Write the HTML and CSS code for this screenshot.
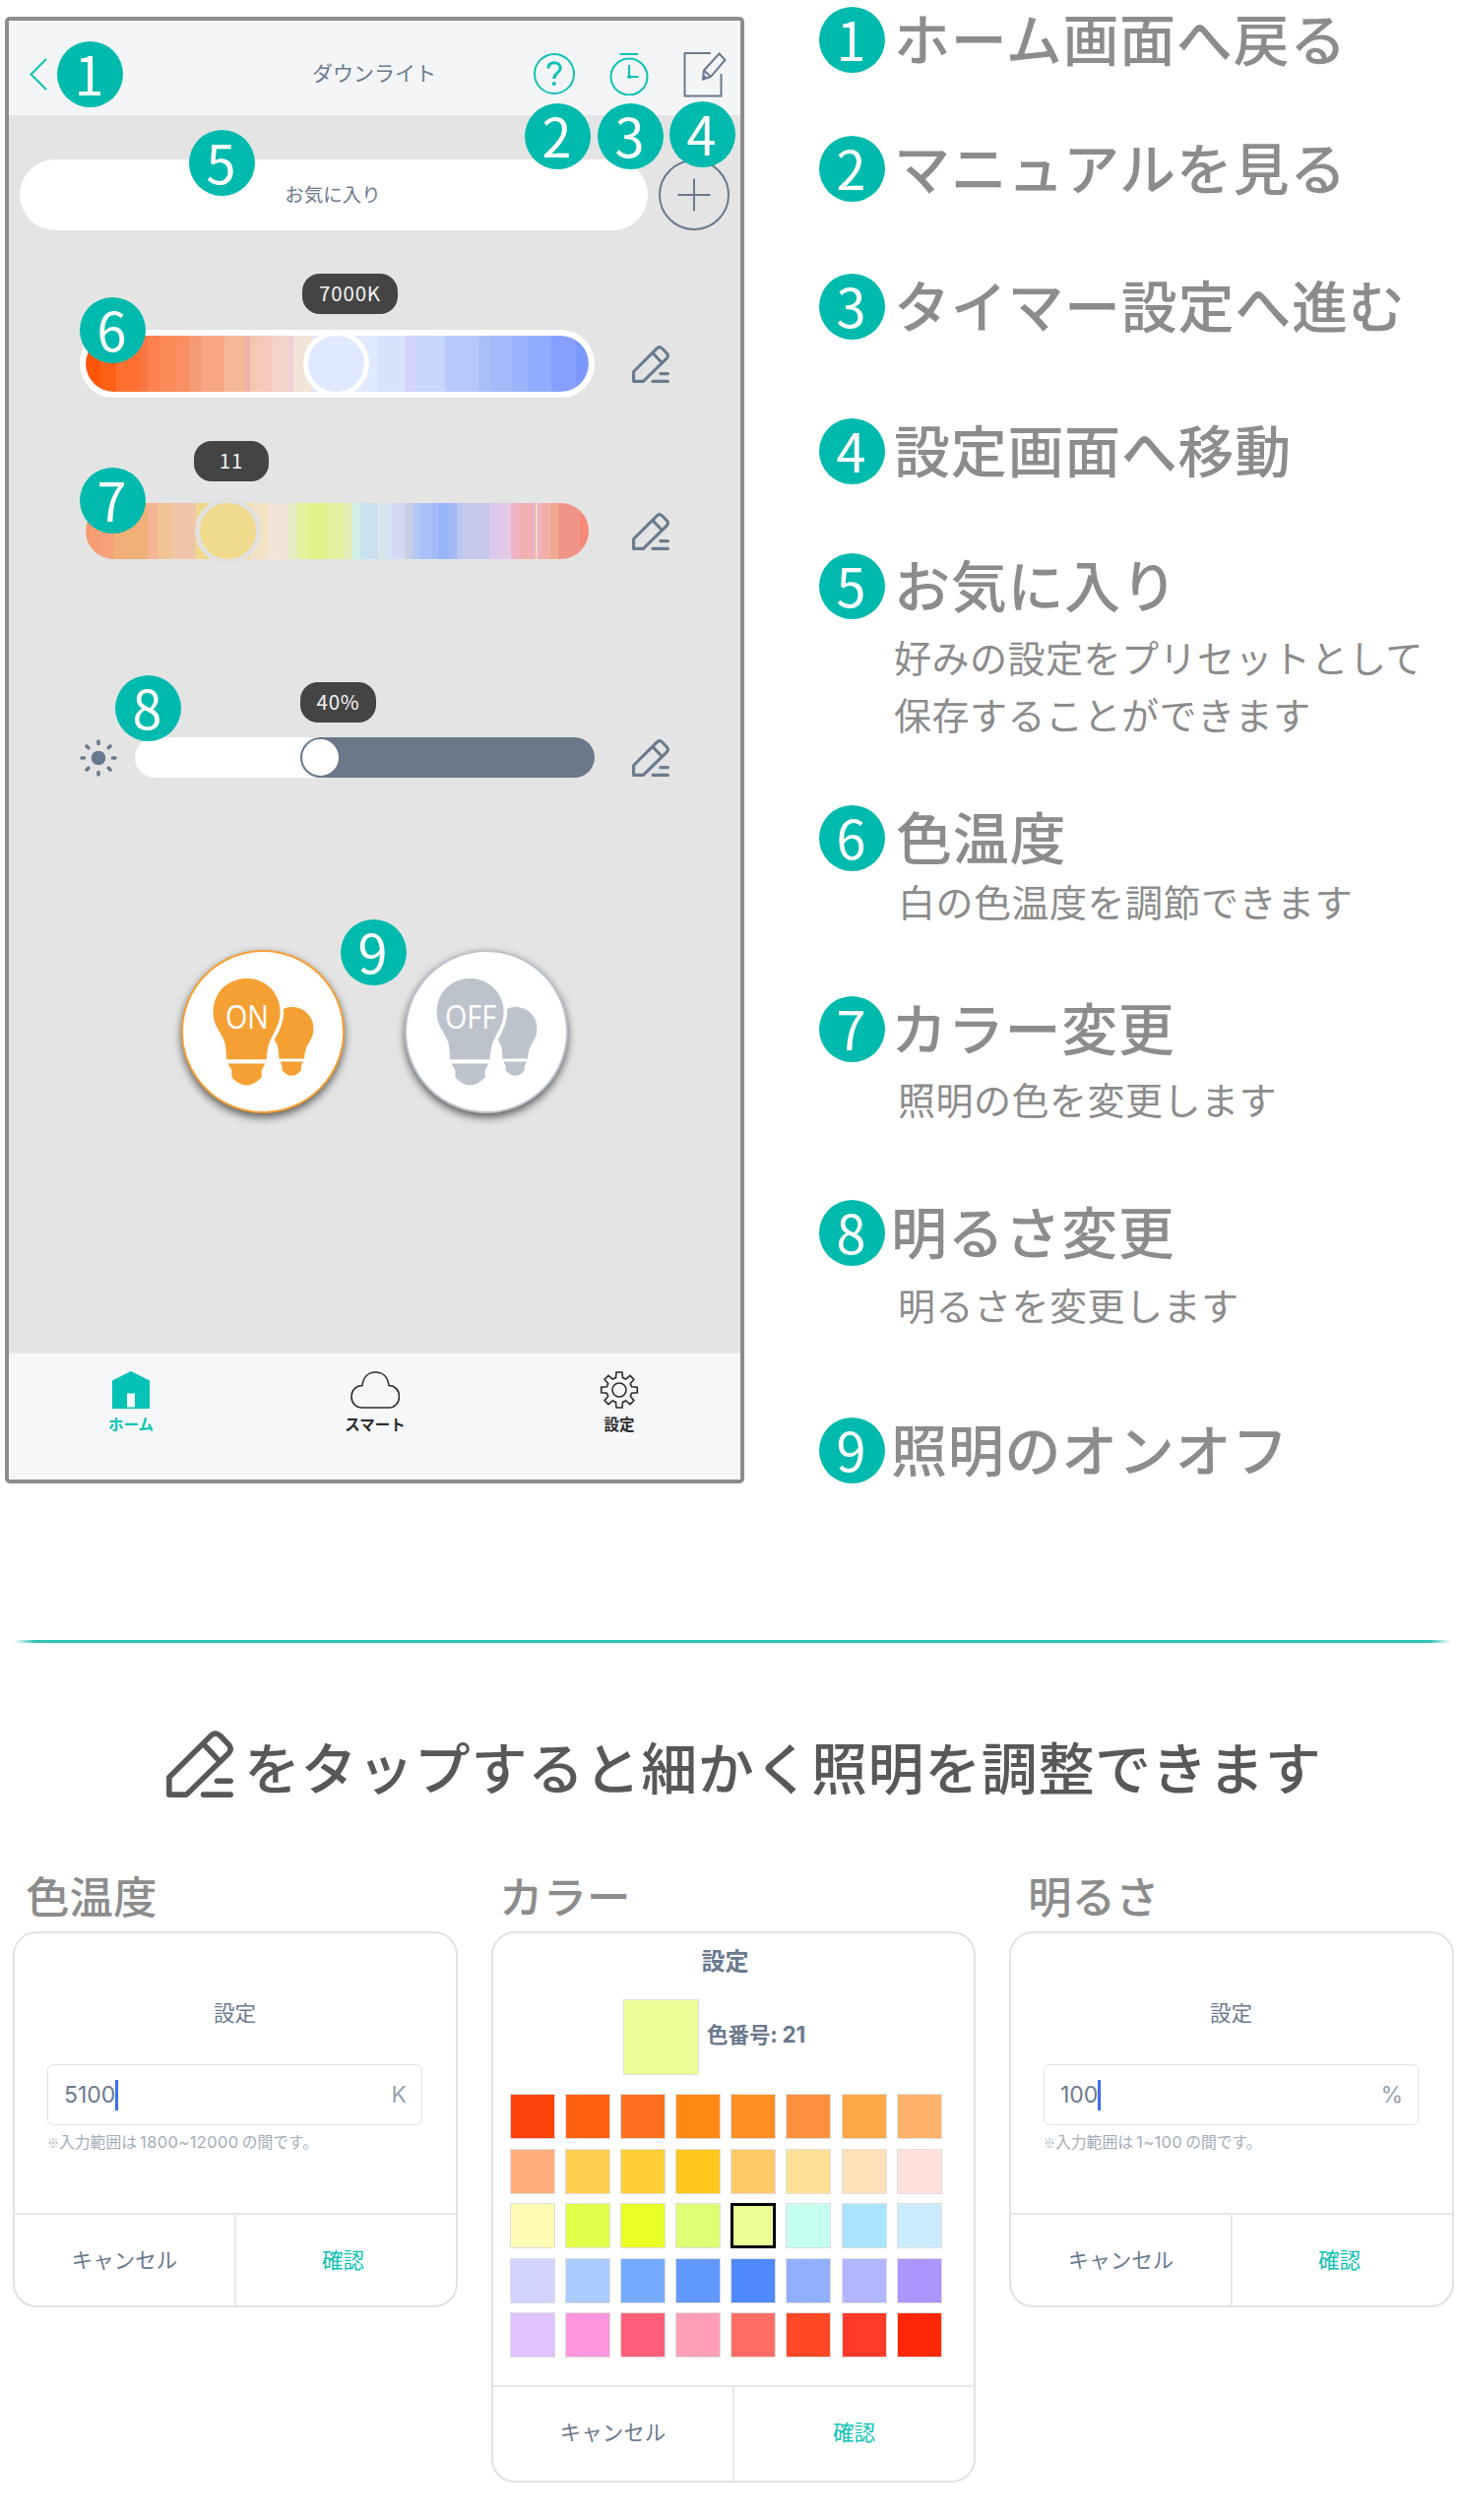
FILE: index.html
```html
<!DOCTYPE html>
<html lang="ja">
<head>
    <meta charset="UTF-8">
    <meta name="viewport" content="width=device-width, initial-scale=1.0">
    <title>ダウンライト 操作ガイド</title>
    <link rel="stylesheet" href="styles.css">
</head>
<body>

<svg class="symbols" width="0" height="0">
    <symbol id="pencil" viewBox="0 0 38 38">
        <path d="M1.6 26.500 L25.600 2.600 Q28 0.700 30.400 2.800 L35.400 8 Q37.400 10.400 35.400 12.800 L11.400 36.400 H1.600 Z M21 7.600 L29.600 16.800 M28.800 28.600 H36.400 M21 36.400 H36.400" fill="none" stroke="currentColor" stroke-width="3.1" stroke-linecap="round" stroke-linejoin="round"/>
    </symbol>
    <symbol id="bulbs" viewBox="72 135 500 500">
        <path d="M170 325 C170 265 215 222 272 222 S375 265 375 325 C375 370 350 390 338 430 Q334 450 333 470 H211 Q210 440 206 420 C195 385 170 370 170 325Z"/>
        <path d="M215 483 H329 L318 503 V525 Q295 549 272 549 Q249 549 227 525 V503Z"/>
        <path d="M385 316 Q395 310 411 310 C450 310 477 340 477 375 C477 405 462 415 455 435 Q449 450 449 468 H371 Q371 445 368 433 Q365 420 357 410 C375 380 388 350 385 316Z"/>
        <path d="M375 477 H446 L439 490 V503 Q425 520 410 520 Q395 520 381 503 V490Z"/>
    </symbol>
</svg>

<main class="guide">
    <section class="phone">
        <header class="phone-header">
            <svg class="back" viewBox="0 0 18 33"><path d="M17 1 L1.5 16.5 L17 32"/></svg>
            <h1>ダウンライト</h1>
            <div class="header-icons">
                <svg class="help" viewBox="0 0 42 42">
                    <circle cx="21" cy="21" r="20"/>
                    <path d="M14.8 15.5 C15 11.5 17.500 9.800 21 9.800 C24.800 9.800 27.200 12 27.200 15.300 C27.200 20 20.800 20 20.800 26" class="thick"/>
                    <circle cx="20.800" cy="31" r="2" class="dot"/>
                </svg>
                <svg class="timer" viewBox="0 0 40 44">
                    <path d="M10.500 2 H29"/>
                    <circle cx="20" cy="25" r="18.500"/>
                    <path d="M20 13 V25 H29.500"/>
                    <circle cx="20" cy="25" r="2" class="dot"/>
                </svg>
                <svg class="edit" viewBox="0 0 44 47">
                    <path d="M28 2 H1.500 V45.500 H38.500 V23"/>
                    <path d="M36.500 2.500 L42.500 9 L28 26 L20 28.500 L21 19.500 Z M21 19.500 L28 26"/>
                    <path d="M20 28.500 L20.500 23.500 L24.500 27 Z" class="lead"/>
                </svg>
            </div>
        </header>

        <div class="phone-body">
            <div class="favorite-row">
                <div class="favorite">お気に入り</div>
                <svg class="add" viewBox="0 0 72 72"><circle cx="36" cy="36" r="35"/><path d="M19.500 36 H52.500 M36 19.500 V52.500"/></svg>
            </div>

            <div class="control">
                <div class="slider temperature"><span class="thumb"></span></div>
                <svg class="pencil"><use href="#pencil"/></svg>
                <span class="tooltip tip-temperature">7000K</span>
            </div>

            <div class="control">
                <div class="slider color"><span class="thumb"></span></div>
                <svg class="pencil"><use href="#pencil"/></svg>
                <span class="tooltip tip-color">11</span>
            </div>

            <div class="control control-brightness">
                <svg class="sun" viewBox="0 0 38 38">
                    <circle cx="19" cy="19" r="7.300"/>
                    <path d="M19 2 V4.500 M19 33.500 V36 M2 19 H4.500 M33.500 19 H36 M7 7 L8.800 8.800 M29.200 29.200 L31 31 M31 7 L29.200 8.800 M8.800 29.200 L7 31"/>
                </svg>
                <div class="brightness"><span class="knob"></span></div>
                <svg class="pencil"><use href="#pencil"/></svg>
                <span class="tooltip tip-brightness">40%</span>
            </div>

            <div class="power">
                <div class="power-button on"><svg><use href="#bulbs"/></svg><span>ON</span></div>
                <div class="power-button off"><svg><use href="#bulbs"/></svg><span>OFF</span></div>
            </div>
        </div>

        <nav class="tabs">
            <div class="tab active">
                <svg viewBox="0 0 50 40"><path d="M25 1 L44 10.500 V39 H6 V10.500 Z" class="fill"/><path d="M21 23.500 H29 V37.500 H21Z" class="door"/></svg>
                ホーム
            </div>
            <div class="tab">
                <svg viewBox="0 0 50 40"><path d="M12 38 C5 38 1 33 1 27 C1 20 6 15.500 12 15.500 C13 7 18 2 25.500 2 C33 2 38 7 39 15.500 C45 15.500 49.500 20 49.500 27 C49.500 33 45 38 39 38 Z"/></svg>
                スマート
            </div>
            <div class="tab">
                <svg viewBox="0 0 50 40">
                    <path d="M21.500 7.600 L22 2 H28 L28.500 7.600 L31.700 9 L36 5.400 L39.900 9.300 L36.300 13.600 L37.600 16.700 L43.300 17.200 V22.800 L37.600 23.300 L36.300 26.400 L39.900 30.700 L36 34.600 L31.700 31 L28.500 32.400 L28 38 H22 L21.500 32.400 L18.300 31 L14 34.600 L10.100 30.700 L13.700 26.400 L12.400 23.300 L6.700 22.800 V17.200 L12.400 16.700 L13.700 13.600 L10.100 9.300 L14 5.400 L18.300 9 Z"/>
                    <circle cx="25" cy="20" r="7"/>
                </svg>
                設定
            </div>
        </nav>

        <span class="badge pin pin-1">1</span>
        <span class="badge pin pin-2">2</span>
        <span class="badge pin pin-3">3</span>
        <span class="badge pin pin-4">4</span>
        <span class="badge pin pin-5">5</span>
        <span class="badge pin pin-6">6</span>
        <span class="badge pin pin-7">7</span>
        <span class="badge pin pin-8">8</span>
        <span class="badge pin pin-9">9</span>
    </section>

    <ol class="legend">
        <li><span class="badge">1</span><h2>ホーム画面へ戻る</h2></li>
        <li><span class="badge">2</span><h2>マニュアルを見る</h2></li>
        <li><span class="badge">3</span><h2>タイマー設定へ進む</h2></li>
        <li><span class="badge">4</span><h2>設定画面へ移動</h2></li>
        <li class="favorite-note"><span class="badge">5</span><h2>お気に入り</h2><p>好みの設定をプリセットとして<br>保存することができます</p></li>
        <li class="temperature-note"><span class="badge">6</span><h2>色温度</h2><p>白の色温度を調節できます</p></li>
        <li class="color-note"><span class="badge">7</span><h2>カラー変更</h2><p>照明の色を変更します</p></li>
        <li class="brightness-note"><span class="badge">8</span><h2>明るさ変更</h2><p>明るさを変更します</p></li>
        <li class="power-note"><span class="badge">9</span><h2>照明のオンオフ</h2></li>
    </ol>
</main>

<hr>

<h2 class="detail-title"><svg><use href="#pencil"/></svg>をタップすると細かく照明を調整できます</h2>

<section class="dialogs">
    <div class="dialog-column">
        <h3>色温度</h3>
        <div class="dialog">
            <div class="dialog-body">
                <h4>設定</h4>
                <div class="field"><span class="value">5100</span><span class="unit">K</span></div>
                <p class="note"><small>※</small>入力範囲は<span>1800~12000</span>の間です。</p>
            </div>
            <div class="actions"><span>キャンセル</span><span class="ok">確認</span></div>
        </div>
    </div>

    <div class="dialog-column column-color">
        <h3>カラー</h3>
        <div class="dialog dialog-color">
            <div class="dialog-body">
                <h4>設定</h4>
                <div class="current"><i></i><b>色番号: <span>21</span></b></div>
                <div class="swatches" id="swatches"></div>
            </div>
            <div class="actions"><span>キャンセル</span><span class="ok">確認</span></div>
        </div>
    </div>

    <div class="dialog-column column-brightness">
        <h3>明るさ</h3>
        <div class="dialog">
            <div class="dialog-body">
                <h4>設定</h4>
                <div class="field"><span class="value">100</span><span class="unit">%</span></div>
                <p class="note"><small>※</small>入力範囲は<span>1~100</span>の間です。</p>
            </div>
            <div class="actions"><span>キャンセル</span><span class="ok">確認</span></div>
        </div>
    </div>
</section>

<script>
    const colors = [
        '#ff430c', '#ff6010', '#ff6f20', '#ff8812', '#ff8f22', '#ff9040', '#ffa845', '#ffb26a',
        '#ffad7a', '#ffcf50', '#ffd035', '#ffc71c', '#ffcb68', '#ffe298', '#fee1b9', '#ffe0da',
        '#fffbb4', '#e4ff4a', '#eaff26', '#dcff74', '#ecff97', '#c5fff0', '#aae4ff', '#cbecff',
        '#d2d4ff', '#aaccff', '#74aaff', '#6098ff', '#4f88ff', '#90b0ff', '#b0b6ff', '#ac95ff',
        '#dfc2ff', '#ff95df', '#ff5f78', '#ff9eb6', '#ff6e65', '#ff4824', '#ff3a28', '#ff2706'
    ];
    const selected = 21;

    const swatches = document.getElementById('swatches');
    colors.forEach((color, index) => {
        const swatch = document.createElement('i');
        swatch.style.background = color;
        if (index + 1 === selected) {
            swatch.className = 'selected';
        }
        swatches.appendChild(swatch);
    });
</script>

</body>
</html>
```

FILE: styles.css
```css
* {
    box-sizing: border-box;
}
body {
    margin: 0;
    background: #fff;
    font-family: "Noto Sans CJK JP", sans-serif;
    color: #8c8c8c;
}
h1, h2, h3, h4, p, ol {
    margin: 0;
    padding: 0;
    font-weight: normal;
}
.symbols {
    position: absolute;
}
.guide {
    display: flex;
    height: 1666px;
    padding-left: 5px;
}

/* phone screen */
.phone {
    position: relative;
    display: flex;
    flex-direction: column;
    width: 751px;
    height: 1490px;
    margin-top: 17px;
    border: 4px solid #8c8c8c;
    border-radius: 5px;
    background: #e4e4e4;
    color: #6a7a8e;
}
.phone svg {
    fill: none;
    stroke: currentColor;
    stroke-width: 2;
}
.phone-header {
    display: grid;
    grid-template-columns: 200px 1fr 200px;
    align-items: center;
    height: 96px;
    padding: 12px 14px 0 21px;
    background: #f3f5f7;
}
.phone-header h1 {
    padding: 0 8px 4px 0;
    font-size: 21px;
    line-height: 30px;
    text-align: center;
}
.back {
    width: 18px;
    height: 33px;
    color: #0bc2b4;
}
.header-icons {
    display: flex;
    align-items: center;
    justify-content: flex-end;
    gap: 35px;
}
.help {
    width: 42px;
    height: 42px;
    color: #0bc2b4;
}
.timer {
    width: 40px;
    height: 44px;
    color: #0bc2b4;
}
.edit {
    width: 44px;
    height: 47px;
}
.phone .thick {
    stroke-width: 3;
}
.phone .dot, .phone .lead {
    fill: currentColor;
    stroke: none;
}
.phone-body {
    flex: 1;
    padding-top: 45px;
}
.favorite-row {
    display: flex;
    gap: 11px;
    margin-left: 11px;
}
.favorite {
    width: 638px;
    height: 72px;
    padding-right: 2px;
    border-radius: 36px;
    background: #fff;
    font-size: 19.5px;
    line-height: 70px;
    text-align: center;
}
.add {
    width: 72px;
    height: 72px;
}
.control {
    position: relative;
    display: flex;
    align-items: center;
    height: 69px;
    margin: 101px 0 0 72px;
}
.pencil {
    width: 38px;
    height: 38px;
    margin-left: 38px;
}
.slider {
    position: relative;
    width: 523px;
    height: 69px;
    border: 6px solid #fff;
    border-radius: 35px;
}
.temperature {
    background: linear-gradient(to right, #ff5508 2.8%, #ff5f15 2.8% 6.1%, #ff7030 6.1% 10.9%, #fa7544 10.9% 12.3%, #ff8050 12.3% 14.7%, #fc8a58 14.7% 17.8%, #fa8f62 17.8% 20.5%, #f59a74 20.5% 22.9%, #f8a684 22.9% 27.5%, #f5b896 27.5% 31.7%, #f0b0b0 31.7% 32.6%, #f3c8aa 32.6% 34%, #f5cabb 34% 37.2%, #f4d4c8 37.2% 40.2%, #ecd0d2 40.2% 41.3%, #f2e4d8 41.3% 45%, #dfe9ff 45% 57.9%, #d8e3fb 57.9% 63.5%, #d2d4fc 63.5% 65.5%, #c8d6fb 65.5% 71.4%, #b6c8fc 71.4% 78%, #a8c0f6 78% 80.4%, #a4bafa 80.4% 84.7%, #9cb4fb 84.7% 87.8%, #90adff 87.8% 92.6%, #87a0ff 92.6% 97.5%, #7b98ff 97.5%) padding-box;
}
.color {
    border-color: transparent;
    background: linear-gradient(to right, #f89c74 2.8%, #f7a07a 2.8% 5.4%, #f0b078 5.4% 12.4%, #f5b496 12.4% 14.3%, #f1c491 14.3% 17%, #f0c6a8 17% 21.9%, #f0d888 21.9% 32.6%, #f3e3c4 32.6% 36.3%, #f3e3d8 36.3% 40.4%, #e8ecc4 40.4% 42%, #e4f09e 42% 44.3%, #e4f28a 44.3% 47.8%, #e4f09e 47.8% 51.3%, #e6ecb8 51.3% 53%, #d0f0e6 53% 54.6%, #cae2f0 54.6% 58.2%, #d4e6ea 58.2% 59.7%, #d4e4f8 59.7% 60.8%, #d4daf4 60.8% 63.5%, #c8cfe4 63.5% 65%, #b4c8f4 65% 66.3%, #abc0f6 66.3% 68.8%, #a4bafa 68.8% 70.1%, #98b4fb 70.1% 72.2%, #a4b8f8 72.2% 73.7%, #b8c8f0 73.7% 74.9%, #c6c8ee 74.9% 80.3%, #dcc8ea 80.3% 81.9%, #e4cae8 81.9% 84.6%, #eeb4c4 84.6% 86.2%, #f0b0b0 86.2% 88.7%, #eeb0c4 88.7% 89.5%, #f3dcb8 89.5% 89.9%, #eeb0c4 89.9% 90.5%, #f2aea8 90.5% 92.4%, #f0aa92 92.4% 94%, #f09488 94% 98.2%, #f58a78 98.2%) padding-box;
}
.thumb {
    position: absolute;
    top: -5px;
    left: 221px;
    width: 67px;
    height: 67px;
    border: 5px solid #fff;
    border-radius: 50%;
    background: #dfe9ff;
}
.color .thumb {
    left: 111px;
    border-color: #e1e1df;
    background: #f0da8c;
}
.tooltip {
    position: absolute;
    top: -57px;
    height: 41px;
    border-radius: 18px;
    background: #444;
    color: #f4f4f4;
    font-size: 20.5px;
    line-height: 39px;
    letter-spacing: 0.8px;
    text-align: center;
}
.tip-temperature {
    left: 226px;
    width: 97px;
}
.tip-color {
    left: 116px;
    width: 76px;
}
.control-brightness {
    margin-top: 161px;
}
.tip-brightness {
    top: -42px;
    left: 224px;
    width: 77px;
}
.phone .sun {
    width: 38px;
    height: 38px;
    fill: currentColor;
    stroke-width: 3.6;
    stroke-linecap: round;
}
.sun circle {
    stroke: none;
}
.brightness {
    position: relative;
    width: 467px;
    height: 41px;
    margin-left: 18px;
    border-radius: 21px;
    background: linear-gradient(to right, #fff 188px, #6a788a 188px);
}
.knob {
    position: absolute;
    top: 0;
    left: 168px;
    width: 41px;
    height: 41px;
    border: 2px solid #6a788a;
    border-radius: 50%;
    background: #fff;
}
.power {
    display: flex;
    gap: 61px;
    margin: 161px 0 0 175px;
}
.power-button {
    position: relative;
    width: 166px;
    height: 166px;
    border: 2px solid #f5a033;
    border-radius: 50%;
    background: #fff;
    box-shadow: 0 4px 8px rgba(0, 0, 0, 0.6);
    color: #f5a033;
}
.off {
    border-color: #bdc3cc;
    color: #bdc3cc;
}
.power-button svg {
    display: block;
    width: 166px;
    height: 166px;
    margin: -2px;
    fill: currentColor;
    stroke: none;
}
.power-button span {
    position: absolute;
    top: 46px;
    left: 25px;
    width: 80px;
    color: #fff;
    font: 33px/40px "Open Sans", sans-serif;
    text-align: center;
    transform: scaleX(0.87);
}
.tabs {
    display: grid;
    grid-template-columns: repeat(3, 248px);
    height: 129px;
    padding-top: 17px;
    border-top: 1px solid #e8eaec;
    background: #f5f7f9;
    color: #2b2b2b;
    font-size: 15.5px;
    font-weight: bold;
    line-height: 20px;
}
.tab {
    display: flex;
    flex-direction: column;
    align-items: center;
    gap: 4px;
}
.tab svg {
    width: 50px;
    height: 40px;
    stroke-width: 1.6;
}
.active {
    color: #04c2b5;
}
.active .fill {
    fill: currentColor;
    stroke: none;
}
.active .door {
    fill: #fff;
    stroke: none;
}

/* numbered markers */
.badge {
    width: 67px;
    height: 67px;
    padding-right: 2px;
    border-radius: 50%;
    background: #00baad;
    color: #fff;
    font-size: 54px;
    line-height: 63px;
    text-align: center;
}
.pin {
    position: absolute;
    margin: -34px 0 0 -34px;
}
.pin-1 { left: 83px; top: 55px; }
.pin-2 { left: 558px; top: 118px; }
.pin-3 { left: 632px; top: 118px; }
.pin-4 { left: 705px; top: 116px; }
.pin-5 { left: 217px; top: 145px; }
.pin-6 { left: 106px; top: 315px; }
.pin-7 { left: 106px; top: 488px; }
.pin-8 { left: 142px; top: 699px; }
.pin-9 { left: 371px; top: 947px; }

.legend {
    display: grid;
    grid-template-rows: 131px 140px 147px 137px 256px 194px 207px 221px 67px;
    align-content: start;
    margin-left: 76px;
    padding-top: 7px;
    list-style: none;
}
.legend li {
    display: grid;
    grid-template-columns: 67px auto;
    column-gap: 9px;
    align-content: start;
}
.legend h2 {
    height: 67px;
    font-size: 57px;
    font-weight: 500;
    line-height: 61px;
    letter-spacing: 0.7px;
    white-space: nowrap;
}
.legend p {
    grid-column: 2;
    padding-left: 4px;
    font-size: 38px;
    line-height: 58px;
    letter-spacing: 0.5px;
    white-space: nowrap;
}
.legend .favorite-note p {
    margin-top: 9px;
    padding-left: 0;
}
.temperature-note h2 {
    padding-left: 2px;
}
.temperature-note p {
    margin-top: 1px;
}
.color-note h2 {
    margin-left: -3px;
}
.color-note p {
    margin-top: 8px;
}
.brightness-note p {
    margin-top: 10px;
}
.brightness-note h2, .power-note h2 {
    margin-left: -3px;
}

hr {
    height: 3px;
    margin: 0 11px 0 14px;
    border: 0;
    background: linear-gradient(to right, transparent, #30c3b4 1.5%, #30c3b4 98.5%, transparent);
}
.detail-title {
    display: flex;
    align-items: center;
    height: 90px;
    margin: 79px 0 0 169px;
    color: #595757;
    font-size: 57px;
    font-weight: 500;
    letter-spacing: 0.6px;
    line-height: 90px;
}
.detail-title svg {
    width: 68px;
    height: 68px;
    margin: -3px 11px 0 0;
}

/* setting dialogs */
.dialogs {
    display: flex;
    align-items: flex-start;
    padding: 59px 0 37px 13px;
}
.dialog-column {
    width: 452px;
}
.column-color {
    width: 492px;
    margin: 0 34px;
}
.dialog-column h3 {
    height: 65px;
    padding-left: 13px;
    font-size: 44.5px;
    font-weight: 500;
    line-height: 56px;
}
.column-color h3 {
    padding-left: 8px;
}
.column-brightness h3 {
    padding-left: 19px;
}
.dialog {
    display: flex;
    flex-direction: column;
    height: 382px;
    border: 2px solid #dfe3e7;
    border-radius: 24px;
    color: #6a7a8e;
    font-size: 21.5px;
}
.dialog-body {
    flex: 1;
    padding: 64px 34px 0 33px;
}
.dialog h4 {
    font-size: 21.5px;
    line-height: 32px;
    text-align: center;
}
.field {
    display: flex;
    align-items: center;
    height: 62px;
    margin-top: 37px;
    padding: 0 15px 0 16px;
    border: 1.5px solid #dfe3e7;
    border-radius: 6px;
    font: 23px Inter, sans-serif;
}
.value {
    border-right: 3px solid #426cf5;
    line-height: 31px;
    letter-spacing: 0;
}
.unit {
    margin-left: auto;
    color: #98a3b0;
}
.note {
    margin-top: 5px;
    color: #a3acb8;
    font-size: 15.8px;
    line-height: 24px;
    white-space: nowrap;
}
.note small {
    font-size: 12px;
}
.note span {
    margin: 0 3px;
    font-family: Inter, sans-serif;
    font-size: 16.5px;
    letter-spacing: 0.4px;
}
.actions {
    display: grid;
    grid-template-columns: 223px 1fr;
    height: 94px;
    border-top: 2px solid #e5e8ea;
    line-height: 90px;
    text-align: center;
}
.actions .ok {
    padding-right: 6px;
    border-left: 2px solid #e5e8ea;
    color: #0bc2b4;
}
.dialog-color {
    height: 560px;
}
.dialog-color .dialog-body {
    padding: 11px 17px 0;
}
.dialog-color h4 {
    padding-right: 17px;
    font-size: 24px;
    font-weight: bold;
}
.current {
    display: flex;
    align-items: center;
    gap: 8px;
    height: 77px;
    margin: 24px 0 0 115px;
}
.current b {
    padding-bottom: 8px;
}
.current span {
    font-family: Inter, sans-serif;
    font-size: 22.5px;
}
.current i {
    width: 77px;
    height: 77px;
    border: 1.5px solid #dedede;
    background: #ecff97;
}
.swatches {
    display: grid;
    grid-template-columns: repeat(8, 46px);
    gap: 9.6px 10.1px;
    margin-top: 19px;
}
.swatches i {
    height: 46px;
    border: 1.5px solid #dedede;
}
.swatches .selected {
    border: 3px solid #000;
}
.dialog-color .actions {
    grid-template-columns: 243px 1fr;
    height: 97px;
}
.dialog-color .ok {
    padding-right: 0;
}
```
